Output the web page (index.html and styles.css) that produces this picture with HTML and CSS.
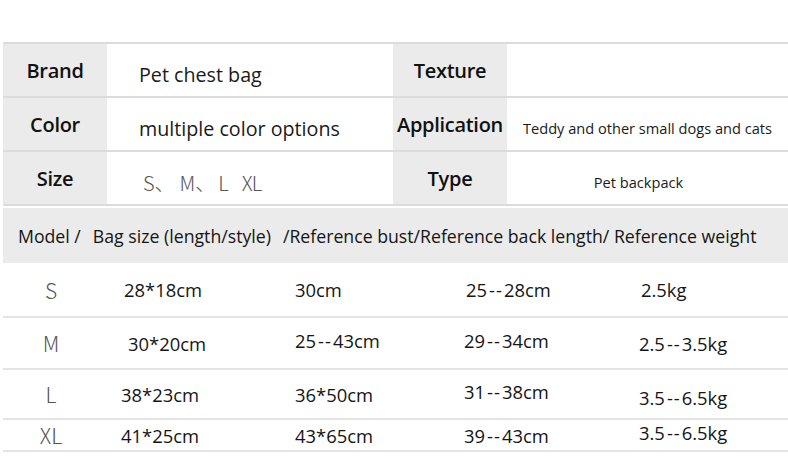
FILE: index.html
```html
<!DOCTYPE html>
<html>
<head>
<meta charset="utf-8">
<link rel="stylesheet" href="styles.css">
</head>
<body>
<div class="sheet">
  <div class="info">
    <div class="irow">
      <div class="lab">Brand</div>
      <div class="val">Pet chest bag</div>
      <div class="lab">Texture</div>
      <div class="val val-r"></div>
    </div>
    <div class="irow">
      <div class="lab">Color</div>
      <div class="val">multiple color options</div>
      <div class="lab">Application</div>
      <div class="val val-r val-sm">Teddy and other small dogs and cats</div>
    </div>
    <div class="irow">
      <div class="lab">Size</div>
      <div class="val"><span class="sizes"><span>S、</span><span class="s-m">M、</span><span class="s-l">L</span><span class="s-xl">XL</span></span></div>
      <div class="lab">Type</div>
      <div class="val val-r val-sm val-left">Pet backpack</div>
    </div>
  </div>
  <div class="head">
    <span>Model /</span>
    <span class="gap">Bag size (length/style)</span>
    <span class="gap">/Reference bust/Reference back length/ Reference weight</span>
  </div>
  <div class="data">
    <div class="drow r-s">
      <div class="sz">S</div><div class="c2">28*18cm</div><div>30cm</div><div class="c4">25<span class="dash">--</span>28cm</div><div class="c5">2.5kg</div>
    </div>
    <div class="drow r-m">
      <div class="sz">M</div><div class="c2 nudge">30*20cm</div><div class="up">25<span class="dash">--</span>43cm</div><div class="up">29<span class="dash">--</span>34cm</div><div>2.5<span class="dash">--</span>3.5kg</div>
    </div>
    <div class="drow r-l">
      <div class="sz">L</div><div class="c2 c2-l">38*23cm</div><div>36*50cm</div><div class="up">31<span class="dash">--</span>38cm</div><div class="down">3.5<span class="dash">--</span>6.5kg</div>
    </div>
    <div class="drow r-xl">
      <div class="sz">XL</div><div class="c2 c2-l">41*25cm</div><div>43*65cm</div><div>39<span class="dash">--</span>43cm</div><div class="up">3.5<span class="dash">--</span>6.5kg</div>
    </div>
  </div>
</div>
</body>
</html>
```
FILE: styles.css
```css
html, body {
  margin: 0;
  background: #fff;
}
body {
  font-family: "Open Sans", "Noto Sans", sans-serif;
  color: #151515;
}
.sheet {
  padding-top: 42px;
  padding-left: 3px;
}
.info {
  border-top: 2px solid #dcdcdc;
}
.irow {
  display: grid;
  grid-template-columns: 104px 286px 114px 1fr;
  height: 52px;
  border-bottom: 2px solid #dcdcdc;
}
.lab {
  background: #ebebeb;
  display: flex;
  align-items: center;
  justify-content: center;
  font-weight: 600;
  font-size: 20px;
  letter-spacing: -0.3px;
  color: #111;
}
.val {
  display: flex;
  align-items: center;
  padding-left: 32px;
  padding-top: 8px;
  font-size: 19.7px;
  color: #1a1a1a;
}
.val-r {
  padding-left: 0;
  justify-content: center;
}
.val-sm {
  font-size: 14.6px;
}
.val-left {
  padding-right: 18px;
}
.sizes {
  font-family: "Noto Sans CJK SC", sans-serif;
  font-weight: 300;
  color: #555;
  font-size: 20px;
  padding-left: 4px;
  display: flex;
  align-items: baseline;
}
.s-m { margin-left: 5px; }
.s-l { margin-left: 3px; }
.s-xl { margin-left: 13px; letter-spacing: -1px; }
.head {
  margin-top: 2px;
  height: 55px;
  background: #ebebeb;
  display: flex;
  align-items: center;
  padding-left: 15px;
  font-size: 17.7px;
  color: #151515;
}
.gap {
  margin-left: 12px;
}
.drow {
  display: grid;
  grid-template-columns: 96px 196px 169px 175px 1fr;
  align-items: center;
  border-bottom: 2px solid #e3e3e3;
  font-size: 18.4px;
  color: #151515;
}
.r-s { height: 53px; }
.r-m { height: 50px; }
.r-l { height: 48px; }
.r-xl { height: 30px; }
.sz {
  text-align: center;
  font-family: "Noto Sans CJK SC", sans-serif;
  font-weight: 300;
  color: #555;
  font-size: 21px;
}
.c2 {
  padding-left: 25px;
}
.c2.nudge {
  padding-left: 29px;
}
.c2.c2-l {
  padding-left: 22px;
}
.c4 {
  padding-left: 2px;
}
.c5 {
  padding-left: 2px;
}
.dash {
  letter-spacing: 1px;
  margin: 0 1px 0 2px;
}
.up {
  position: relative;
  top: -3px;
}
.down {
  position: relative;
  top: 3px;
}
```
